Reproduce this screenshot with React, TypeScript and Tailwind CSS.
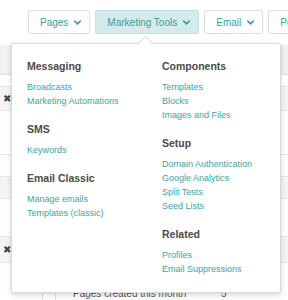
import { ChevronDown } from 'lucide-react'

const columns = [
  [
    { title: 'Messaging', links: ['Broadcasts', 'Marketing Automations'] },
    { title: 'SMS', links: ['Keywords'] },
    { title: 'Email Classic', links: ['Manage emails', 'Templates (classic)'] },
  ],
  [
    { title: 'Components', links: ['Templates', 'Blocks', 'Images and Files'] },
    { title: 'Setup', links: ['Domain Authentication', 'Google Analytics', 'Split Tests', 'Seed Lists'] },
    { title: 'Related', links: ['Profiles', 'Email Suppressions'] },
  ],
]

function NavButton({ label, active, chevron = true }: { label: string; active?: boolean; chevron?: boolean }) {
  return (
    <div
      className={`flex h-[24px] shrink-0 items-center gap-[4px] rounded-[2px] border pl-[11px] pr-[6px] text-[10px] text-[#3a9e9d] ${
        active ? 'border-[#c3dfdf] bg-[#d5eaea]' : 'border-[#dedede] bg-white'
      }`}
    >
      <span>{label}</span>
      {chevron && <ChevronDown className="h-[11px] w-[11px]" strokeWidth={3.5} />}
    </div>
  )
}

function Xmark() {
  return <span className="pl-[3px] text-[10px] leading-none text-[#444]">✖</span>
}

export default function App() {
  return (
    <div className="relative h-[300px] w-[288px] overflow-hidden bg-white font-['Liberation_Sans',Arial,sans-serif]">
      {/* top nav */}
      <div className="flex gap-[5px] pl-[28px] pt-[10px]">
        <NavButton label="Pages" />
        <NavButton label="Marketing Tools" active />
        <NavButton label="Email" />
        <NavButton label="Pe" chevron={false} />
      </div>

      {/* page content behind the menu */}
      <div className="mt-[11px] flex flex-col">
        <div className="h-[30px] border-b border-[#e2e2e2] bg-[#f1f1f1]" />
        <div className="h-[12px] border-b border-[#e6e6e6]" />
        <div className="flex h-[24px] items-center border-b border-[#e6e6e6] bg-[#f4f4f4]">
          <Xmark />
        </div>
        <div className="h-[44px] border-b border-[#e6e6e6]" />
        <div className="h-[22px] border-b border-[#e6e6e6]" />
        <div className="h-[22px] border-b border-[#e6e6e6] bg-[#f4f4f4]" />
        <div className="h-[38px] border-b border-[#e6e6e6]" />
        <div className="flex h-[26px] items-center border-b border-[#e6e6e6] bg-[#f4f4f4]">
          <Xmark />
        </div>
        <div className="flex h-[38px] items-end">
          <div className="ml-[42px] h-full border-l border-[#e2e2e2]" />
          <div className="ml-[12px] h-full border-l border-[#e2e2e2]" />
          <span className="ml-[17px] w-[148px] text-[10px] leading-[14px] text-[#555]">Pages created this month</span>
          <span className="text-[10px] leading-[14px] text-[#555]">5</span>
        </div>
      </div>

      {/* dropdown menu */}
      <div className="absolute left-[11px] top-[43px] h-[250px] w-[270px] rounded-[2px] border border-[#d9d9d9] bg-white shadow-[0_2px_5px_rgba(0,0,0,0.16)]">
        <div className="absolute -top-[6px] left-[128px] h-[11px] w-[11px] rotate-45 border-l border-t border-[#d9d9d9] bg-white" />
        <div className="grid grid-cols-[135px_1fr] pl-[15px] pt-[15px]">
          {columns.map((col, i) => (
            <div key={i} className="flex flex-col gap-[14px]">
              {col.map((section) => (
                <div key={section.title}>
                  <div className="mb-[7px] text-[10.5px] font-bold leading-[14px] text-[#4a4a4a]">{section.title}</div>
                  {section.links.map((link) => (
                    <div key={link} className="text-[9px] leading-[14px] text-[#3aa5a4]">
                      {link}
                    </div>
                  ))}
                </div>
              ))}
            </div>
          ))}
        </div>
      </div>
    </div>
  )
}
